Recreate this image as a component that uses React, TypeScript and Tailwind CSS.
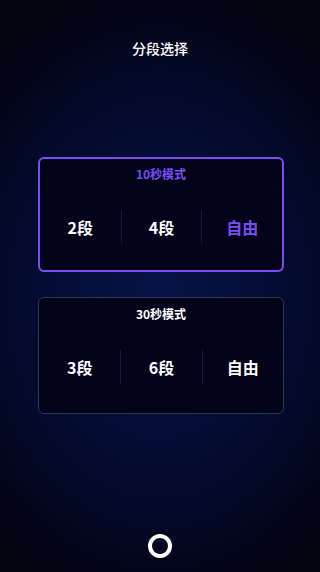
const modes = [
  { title: '10秒模式', options: ['2段', '4段', '自由'], active: true },
  { title: '30秒模式', options: ['3段', '6段', '自由'], active: false },
];

function ModeCard({ title, options, active }: { title: string; options: string[]; active: boolean }) {
  return (
    <div
      className={
        active
          ? 'rounded-md border-2 border-[#7b4cf6] bg-[#03041a] h-[115px] flex flex-col'
          : 'rounded-md border border-[#33364f] bg-[#03041a] h-[117px] flex flex-col'
      }
    >
      <div
        className={
          active
            ? 'text-center text-[12px] font-bold text-[#7b4cf6] mt-[7px] leading-4'
            : 'text-center text-[12px] font-bold text-white mt-[8px] leading-4'
        }
      >
        {title}
      </div>
      <div className={active ? 'flex flex-1 items-center pt-[2px]' : 'flex flex-1 items-center pb-[2px]'}>
        {options.map((o, i) => (
          <div key={o} className="flex flex-1 items-center">
            {i > 0 && <div className="w-px h-[34px] bg-[#151a3a]" />}
            <div
              className={
                active && i === 2
                  ? 'flex-1 text-center text-[16px] font-bold text-[#7b4cf6]'
                  : 'flex-1 text-center text-[16px] font-bold text-white'
              }
            >
              {o}
            </div>
          </div>
        ))}
      </div>
    </div>
  );
}

export default function App() {
  return (
    <div
      className="w-[320px] h-[572px] flex flex-col bg-[radial-gradient(ellipse_75%_55%_at_50%_52%,#071348_0%,#050d36_45%,#030720_80%,#02030f_100%)] text-white"
      style={{ fontFamily: '"Noto Sans CJK SC", Roboto, sans-serif' }}
    >
      <div className="mt-[38px] text-center text-[14px] font-medium leading-5">分段选择</div>
      <div className="mt-[99px] ml-[38px] w-[246px] flex flex-col gap-[25px]">
        {modes.map((m) => (
          <ModeCard key={m.title} {...m} />
        ))}
      </div>
      <div className="mt-auto mb-[14px] self-center w-6 h-6 rounded-full border-4 border-white" />
    </div>
  );
}
